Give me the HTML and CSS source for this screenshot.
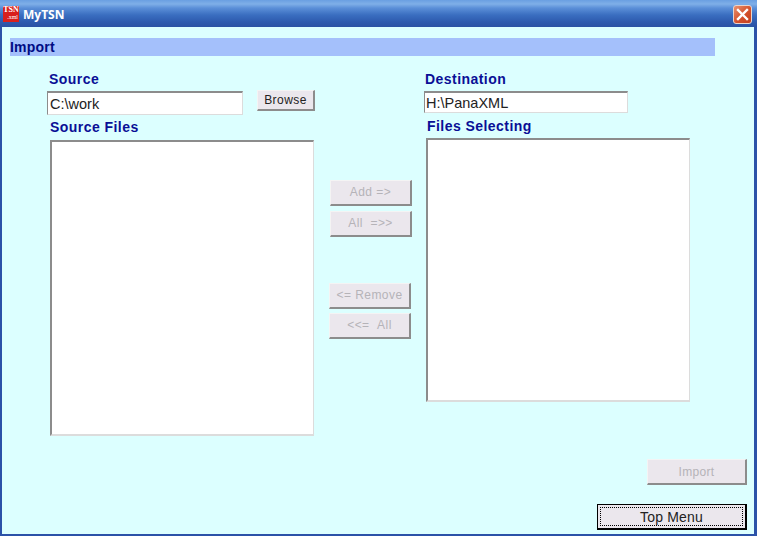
FILE: index.html
```html
<!DOCTYPE html>
<html lang="en">
<head>
<meta charset="utf-8">
<title>MyTSN</title>
<link rel="stylesheet" href="styles.css">
</head>
<body>
<div class="window">
  <header class="titlebar">
    <div class="app-icon"><span class="app-icon-top">TSN</span><span class="app-icon-bottom">.xml</span></div>
    <span class="app-title">MyTSN</span>
    <button class="close" type="button" aria-label="Close">
      <svg width="13" height="13" viewBox="0 0 13 13"><path d="M2 2 L11 11 M11 2 L2 11" stroke="#fff" stroke-width="2.4" stroke-linecap="square" fill="none"/></svg>
    </button>
  </header>
  <main class="content">
    <h1 class="section">Import</h1>
    <div class="columns">
      <section class="col col-left">
        <label class="label label-source">Source</label>
        <div class="source-row">
          <input class="field field-source" type="text" value="C:\work">
          <button class="btn btn-browse" type="button"><span class="btn-text">Browse</span></button>
        </div>
        <label class="label label-files">Source Files</label>
        <select class="list list-source" multiple></select>
      </section>
      <section class="col col-mid">
        <div class="move-group group-add">
          <button class="btn btn-move" type="button" disabled><span class="btn-text">Add =&gt;</span></button>
          <button class="btn btn-move" type="button" disabled><span class="btn-text">All &nbsp;=&gt;&gt;</span></button>
        </div>
        <div class="move-group group-remove">
          <button class="btn btn-move" type="button" disabled><span class="btn-text">&lt;= Remove</span></button>
          <button class="btn btn-move" type="button" disabled><span class="btn-text">&lt;&lt;= &nbsp;All</span></button>
        </div>
      </section>
      <section class="col col-right">
        <label class="label label-dest">Destination</label>
        <input class="field field-dest" type="text" value="H:\PanaXML">
        <label class="label label-selecting">Files Selecting</label>
        <select class="list list-dest" multiple></select>
      </section>
    </div>
    <div class="actions">
      <button class="btn btn-import" type="button" disabled><span class="btn-text">Import</span></button>
      <button class="btn btn-top" type="button"><span class="focus-ring">Top Menu</span></button>
    </div>
  </main>
</div>
</body>
</html>
```
FILE: styles.css
```css
* { box-sizing: border-box; }
html, body { margin: 0; padding: 0; }
body { width: 757px; height: 536px; overflow: hidden; font-family: "Liberation Sans", Arial, sans-serif; }

.window {
  width: 757px; height: 536px; display: flex; flex-direction: column;
  background: #2b52a8;
}
.titlebar {
  height: 27px; flex: none; display: flex; align-items: center; padding: 1px 5px 0 3px;
  background: linear-gradient(to bottom, #6a9fe2 0, #7fafe8 4px, #5b8fd8 8px, #3a6ec0 15px, #2d5aae 22px, #2a52a4 27px);
}
.app-icon {
  width: 16px; height: 16px; background: #d8201c; color: #fff;
  display: flex; flex-direction: column; font-family: "Liberation Serif", serif; line-height: 7px;
}
.app-icon-top { font-size: 8px; text-align: center; font-weight: bold; }
.app-icon-bottom { font-size: 6px; text-align: right; padding-right: 1px; margin-top: 1px; }
.app-title { margin-left: 4px; color: #fff; font: bold 12px "Open Sans", "Liberation Sans", sans-serif; }
.close {
  margin-left: auto; width: 19px; height: 19px; padding: 0; border: 1px solid #e9d4cc; border-radius: 3px;
  background: linear-gradient(135deg, #e8916f, #d4512c 55%, #c2401e);
  display: flex; align-items: center; justify-content: center;
}

.content {
  flex: 1; margin: 0 3px 2px 2px; background: #dcffff; padding: 11px 0 0 8px;
  display: flex; flex-direction: column; min-height: 0;
}
.section {
  margin: 0; width: 705px; height: 18px; background: #a4c0fb; color: #000c84;
  font: bold 14px/18px "Liberation Sans", sans-serif;
  padding-left: 0; letter-spacing: 0.2px;
}

.columns { display: flex; align-items: flex-start; }
.label { display: block; color: #0a0f96; font-weight: bold; font-size: 14px; line-height: 16px; letter-spacing: 0.45px; }

.col-left { width: 268px; margin-left: 37px; padding-top: 15px; }
.label-source { margin-left: 2px; height: 20px; }
.source-row { display: flex; align-items: flex-start; gap: 14px; height: 28px; }
.label-files { margin-left: 3px; height: 21px; }
.list-source { margin-left: 3px; height: 296px; }

.col-right { margin-left: 12px; padding-top: 15px; }
.label-dest { margin-left: 1px; height: 20px; }
.label-selecting { margin-left: 3px; height: 25px; padding-top: 5px; line-height: 16px; }
.list-dest { margin-left: 2px; height: 264px; }

.field {
  display: block; background: #fff; color: #222; font: 14.5px/20px "Liberation Sans", sans-serif; padding: 0 0 0 2px;
  border-style: solid; border-width: 2px 1px 1px 1px; border-color: #8c8c8c #dcdcdc #dcdcdc #8c8c8c; outline: none; border-radius: 0;
}
.field-source { width: 196px; height: 24px; }
.field-dest { width: 204px; height: 22px; padding-left: 1px; }

.list {
  display: block; width: 264px; background: #fff; appearance: none; padding: 0; border-radius: 0; outline: none;
  border-style: solid; border-width: 2px 1px 2px 2px; border-color: #8c8c8c #dcdcdc #dcdcdc #8c8c8c;
}

.btn {
  display: block; padding: 0; background: #ebe7ed; color: #222; border-radius: 0;
  border-style: solid; border-width: 1px 2px 2px 1px; border-color: #f4f4f4 #8c8c8c #8c8c8c #f4f4f4;
  font-family: "Liberation Sans", sans-serif;
}
.btn:disabled { color: #b5b3b8; }
.btn-text { display: block; margin-top: -2px; }
.btn-browse { width: 58px; height: 21px; margin-top: -1px; font-size: 12px; letter-spacing: 0.45px; }
.btn-browse .btn-text { margin-top: 0; }

.col-mid { margin-left: 14px; width: 83px; padding-top: 124px; }
.move-group { display: flex; flex-direction: column; gap: 5px; width: 82px; }
.group-add { margin-left: 1px; }
.group-remove { margin-top: 46px; gap: 4px; }
.btn-move { width: 82px; height: 26px; font-size: 12px; letter-spacing: 0.45px; }

.actions { display: flex; flex-direction: column; align-items: flex-end; gap: 19px; width: 737px; margin-top: 23px; }
.btn-import { width: 100px; height: 26px; font-size: 12px; letter-spacing: 0.3px; }
.btn-import .btn-text { margin-top: 0; }
.btn-top {
  width: 150px; height: 26px; font-size: 14px; padding: 2px;
  border: 1px solid #000; border-width: 1px 2px 2px 1px;
}
.focus-ring { display: block; height: 100%; line-height: 18px; letter-spacing: 0.2px; border: 1px dotted #000; }
```
